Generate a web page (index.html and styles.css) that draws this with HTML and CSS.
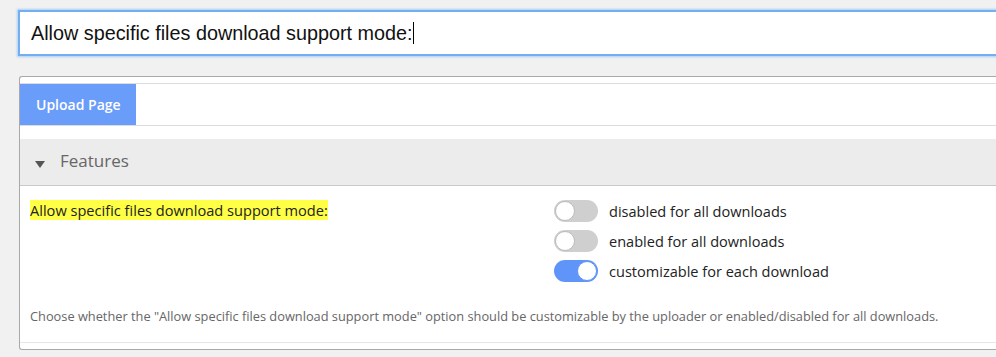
FILE: index.html
```html
<!DOCTYPE html>
<html>
<head>
<meta charset="utf-8">
<link rel="stylesheet" href="styles.css">
</head>
<body>
<div class="page">
  <div class="search"><span class="search-text">Allow specific files download support mode:</span><span class="caret"></span></div>
  <div class="panel">
    <div class="inner">
      <div class="tabs"><div class="tab">Upload Page</div></div>
      <div class="section-head"><span class="tri"></span><span class="section-title">Features</span></div>
      <div class="setting">
        <div class="label-col"><span class="hl">Allow specific files download support mode:</span></div>
        <div class="options">
          <div class="opt"><span class="toggle"><span class="knob"></span></span><span>disabled for all downloads</span></div>
          <div class="opt"><span class="toggle"><span class="knob"></span></span><span>enabled for all downloads</span></div>
          <div class="opt"><span class="toggle on"><span class="knob"></span></span><span>customizable for each download</span></div>
        </div>
      </div>
      <div class="help">Choose whether the "Allow specific files download support mode" option should be customizable by the uploader or enabled/disabled for all downloads.</div>
    </div>
  </div>
</div>
</body>
</html>
```
FILE: styles.css
```css
html, body { margin: 0; padding: 0; }
body { background: #f1f1f1; overflow: hidden; width: 996px; height: 357px; }
.page { padding: 10px 0 0 18px; width: 1200px; }
.search {
  box-sizing: border-box;
  height: 46px;
  border: 2px solid #72aef0;
  box-shadow: 0 0 2px 1px #a9cdf5;
  background: #fff;
  display: flex; align-items: center;
  padding-left: 11px;
  font-family: "Liberation Sans", Arial, sans-serif;
  font-size: 19.8px; color: #111;
}
.caret { display: inline-block; width: 1px; height: 22px; background: #000; }
.panel {
  margin-top: 20px; margin-left: 1px;
  border: 1px solid #a9a9a9; border-right: none;
  border-radius: 3px 0 0 3px;
  background: #fff;
  padding: 6px 0;
  font-family: "Open Sans", "Noto Sans", sans-serif;
}
.inner { border-top: 1px solid #dcdcdc; border-bottom: 1px solid #e6e6e6; }
.tabs { height: 41px; border-bottom: 1px solid #dcdcdc; display: flex; }
.tab {
  background: #6a9cf9; color: #fff; font-weight: 600; font-size: 14px;
  padding: 0 15px 0 16px; display: flex; align-items: center;
}
.section-head {
  margin-top: 13px; height: 46px; background: #ececec; border-bottom: 1px solid #c8c8c8;
  display: flex; align-items: center;
}
.tri { width: 0; height: 0; border-left: 5px solid transparent; border-right: 5px solid transparent; border-top: 7px solid #555; margin: 4px 15px 0 15px; }
.section-title { font-size: 17px; color: #666; margin-top: -3px; }
.setting { display: flex; padding: 14px 0 0 10px; }
.label-col { width: 524px; font-size: 14.6px; color: #222; }
.hl { background: #ffff45; }
.options { display: flex; flex-direction: column; gap: 8px; font-size: 14.55px; color: #222; }
.opt { display: flex; align-items: center; gap: 11px; height: 22px; }
.toggle { position: relative; width: 44px; height: 22px; border-radius: 11px; background: #cfcfcf; display: inline-block; }
.toggle .knob { position: absolute; left: 1px; top: 1px; width: 18px; height: 18px; border-radius: 50%; background: #fff; border: 1px solid #bbb; }
.toggle.on { background: #5f95f8; }
.toggle.on .knob { left: 23px; border-color: #5f95f8; }
.help { padding: 25px 0 17px 10px; font-size: 12.8px; color: #666; }
```
